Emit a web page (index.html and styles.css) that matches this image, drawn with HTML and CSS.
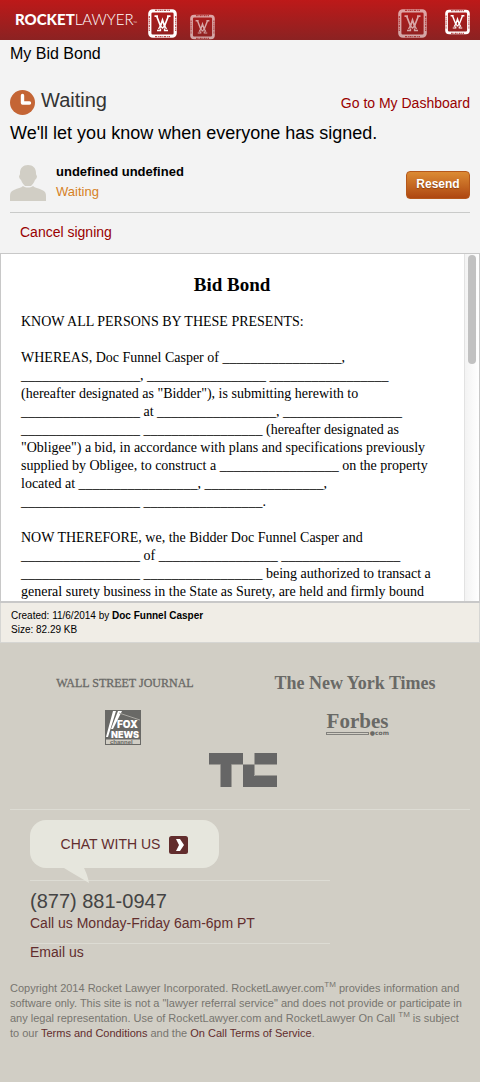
FILE: index.html
```html
<!DOCTYPE html>
<html lang="en">
<head>
<meta charset="utf-8">
<meta name="viewport" content="width=device-width, initial-scale=1">
<title>My Bid Bond</title>
<link rel="stylesheet" href="styles.css">
</head>
<body>
<svg width="0" height="0" class="defs" aria-hidden="true">
  <symbol id="seal" viewBox="0 0 29 29">
    <rect x="1.800" y="1.800" width="25.400" height="25.400" rx="3" fill="none" stroke="currentColor" stroke-width="3.200"/>
    <g fill="none" stroke="#b84a4a" stroke-width="1.200" stroke-dasharray="2 .8 1 .7">
      <path d="M7 1.300h15M7 27.700h15M1.300 7v15M27.700 7v15"/>
    </g>
    <path d="M6.500 7.200h3.500M22.500 7.200H19M8.800 7.500l3.700 9.500 2-6 2 6 3.700-9.500" fill="none" stroke="currentColor" stroke-width="1.700"/>
    <path d="M12.500 16.500l-2 3.500M16.500 16.500l2 3.500M12.500 17l2 2 2-2M9 21.500h3.500v-2M20 21.500h-3.500v-2" fill="none" stroke="currentColor" stroke-width="1.300"/>
  </symbol>
</svg>
<header class="topbar">
  <a class="brand" href="#"><b>ROCKET</b>LAWYER<small>™</small></a>
  <a class="seal seal-large" href="#" aria-label="Menu"><svg><use href="#seal"/></svg></a>
  <a class="seal seal-small dim low" href="#" aria-label="Documents"><svg><use href="#seal"/></svg></a>
  <a class="seal seal-large dim right" href="#" aria-label="Search"><svg><use href="#seal"/></svg></a>
  <a class="seal seal-small" href="#" aria-label="Account"><svg><use href="#seal"/></svg></a>
</header>
<main>
  <section class="status">
    <h1>My Bid Bond</h1>
    <div class="status-row">
      <svg class="clock" viewBox="0 0 25 25" aria-hidden="true"><circle cx="12.5" cy="12.5" r="12.5" fill="#c46535"/><path d="M12.5 5.5v7.500h7" fill="none" stroke="#fff" stroke-width="3.4" stroke-linecap="round" stroke-linejoin="round"/></svg>
      <h2>Waiting</h2>
      <a href="#">Go to My Dashboard</a>
    </div>
    <p class="lead">We'll let you know when everyone has signed.</p>
    <div class="signer">
      <svg class="avatar" viewBox="0 0 36 36" aria-hidden="true"><path d="M18 0c5 0 8 3 8 8 0 1 0 2 1 3 0 2-1 3-2 4-1 3-3 5-4 6h-6c-1-1-3-3-4-6-1-1-2-2-2-4 1-1 1-2 1-3 0-5 3-8 8-8zM13 21c3 2 7 2 10 0 2 2 5 2 9 4 3 1 4 3 4 6v5H0v-5c0-3 1-5 4-6 4-2 7-2 9-4z" fill="#d1cec5"/></svg>
      <div class="signer-name"><strong>undefined undefined</strong><span>Waiting</span></div>
      <button type="button">Resend</button>
    </div>
    <a class="cancel" href="#">Cancel signing</a>
  </section>
  <section class="document">
    <div class="paper">
      <h3>Bid Bond</h3>
      <p>KNOW ALL PERSONS BY THESE PRESENTS:</p>
      <p>WHEREAS, Doc Funnel Casper of _________________, _________________, _________________ _________________ (hereafter designated as "Bidder"), is submitting herewith to _________________ at _________________, _________________ _________________ _________________ (hereafter designated as "Obligee") a bid, in accordance with plans and specifications previously supplied by Obligee, to construct a _________________ on the property located at _________________, _________________, _________________ _________________.</p>
      <p>NOW THEREFORE, we, the Bidder Doc Funnel Casper and _________________ of _________________ _________________ _________________ _________________ being authorized to transact a general surety business in the State as Surety, are held and firmly bound</p>
    </div>
    <div class="track"><div class="thumb"></div></div>
  </section>
  <section class="meta">
    <div>Created: 11/6/2014 by <strong>Doc Funnel Casper</strong></div>
    <div>Size: 82.29 KB</div>
  </section>
</main>
<footer>
  <div class="press">
    <span class="wsj">WALL STREET JOURNAL</span>
    <span class="nyt">The New York Times</span>
    <svg class="fox" viewBox="0 0 36 35" role="img" aria-label="Fox News Channel">
      <path d="M0 0h36v35H0z" fill="#696966"/>
      <path d="M8 1h3L3 27H1zM13 1h4L8 19H6z" fill="#fff"/>
      <path d="M14 3l21 7" stroke="#aaa8a2"/>
      <path d="M1 29.500h34v4.500H1z" fill="#d1cec5"/>
      <text x="12" y="18" class="fox-word">FOX</text>
      <text x="6" y="28" class="fox-word fox-news">NEWS</text>
      <text x="5" y="34" class="fox-channel">channel</text>
    </svg>
    <div class="forbes"><span>Forbes</span><div><i></i><small>●com</small></div></div>
    <svg class="tc" viewBox="0 0 68 34" role="img" aria-label="TechCrunch"><path d="M0 0h34v11H23v23H11V11H0zM46 0h22v11H46zM34 12h11v11h23v11H34z" fill="#666"/><path d="M0 11.500h11.500V34M22.500 34V11.500H68M45.500 0v22.500H68" fill="none" stroke="#9b9994"/></svg>
  </div>
  <div class="contact">
    <a class="chat" href="#">CHAT WITH US
      <svg class="arrow" viewBox="0 0 19 18" aria-hidden="true"><rect width="19" height="18" rx="2.500" fill="#622d2d"/><path d="M7 3h4l4 6-4 6H7l3-6z" fill="#fff"/></svg>
      <svg class="tail" viewBox="0 0 26 15" aria-hidden="true"><path d="M0 0h20c2 4 4 9 5 15C17 10 8 5 0 0z" fill="#e6e6dd"/></svg>
    </a>
    <div class="phone"><span>(877) 881-0947</span><a href="#">Call us Monday-Friday 6am-6pm PT</a></div>
    <a class="email" href="#">Email us</a>
  </div>
  <p class="legal">Copyright 2014 Rocket Lawyer Incorporated. RocketLawyer.com<sup>TM</sup> provides information and software only. This site is not a "lawyer referral service" and does not provide or participate in any legal representation. Use of RocketLawyer.com and RocketLawyer On Call <sup>TM</sup> is subject to our <a href="#">Terms and Conditions</a> and the <a href="#">On Call Terms of Service</a>.</p>
</footer>
</body>
</html>
```
FILE: styles.css
```css
* { box-sizing: border-box; }
body { margin: 0; background: #d1cec5; color: #000; font-family: "Liberation Sans", Arial, sans-serif; font-size: 14px; }
h1, h2, h3, p { margin: 0; font-weight: normal; }
a { color: #900; text-decoration: none; }
svg { display: block; }
.defs { position: absolute; }

.topbar { display: flex; align-items: flex-start; height: 40px; padding: 9px 10px 0 15px; background: linear-gradient(#bd1919, #8b2222); overflow: hidden; }
.brand { width: 133px; color: #fff; font: 300 15px/20px Lato, sans-serif; white-space: nowrap; }
.brand b { font-weight: 900; }
.brand small { font-size: 5px; }
.seal { color: #fff; }
.seal svg { width: 100%; height: 100%; }
.seal-large { width: 29px; height: 29px; }
.seal-small { width: 25px; height: 26px; }
.low { margin: 5px 0 0 13px; }
.right { margin: 0 18px 0 auto; }
.dim { opacity: .6; }

.status { padding: 0 10px; background: #f3f3f3; }
h1 { font-size: 16px; line-height: 28px; }
.status-row { display: flex; align-items: center; margin-top: 18px; height: 32px; }
.clock { width: 25px; height: 25px; }
h2 { margin-left: 6px; margin-bottom: 3px; font-size: 20px; color: #333; }
.status-row a { margin-left: auto; margin-top: 2px; }
.lead { font-size: 18px; line-height: 30px; }
.signer { display: flex; align-items: center; height: 65px; border-bottom: 1px solid #c9cac9; }
.avatar { width: 36px; height: 36px; margin-top: 5px; }
.signer-name { display: flex; flex-direction: column; margin: 3px 0 0 10px; font-size: 13px; line-height: 20px; }
.signer-name span { color: #d6811f; }
.signer button { width: 64px; height: 28px; margin: 10px 0 0 auto; padding: 0 0 2px; border: 1px solid #b5581b; border-radius: 4px; background: linear-gradient(#dc8b34, #ae4711); color: #fff; font: bold 12px "Liberation Sans", Arial, sans-serif; text-shadow: 0 1px 1px #8b3e10; }
.cancel { display: block; padding: 0 10px 2px; line-height: 38px; }

.document { position: relative; height: 350px; border: 1px solid #c8c8c8; border-bottom-width: 2px; background: #fff; overflow: hidden; }
.paper { padding: 21px 36px 0 20px; font: 14px/18px "Liberation Serif", "Times New Roman", serif; }
.paper h3 { font-size: 19px; line-height: 20px; font-weight: bold; text-align: center; }
.paper p { margin-top: 18px; }
.track { position: absolute; top: 0; right: 0; bottom: 0; width: 15px; border-left: 1px solid #e2e2e2; background: linear-gradient(90deg, #f3f3f3, #fff); }
.thumb { width: 8px; height: 109px; margin: 1px 0 0 3px; border-radius: 4px; background: #c1c1c1; }
.meta { padding: 6px 10px 5px; border: 1px solid #d6d6d3; border-top: 0; background: #f0ede6; font-size: 10px; line-height: 14px; }

footer { padding: 0 10px 40px; }
.press { display: grid; grid-template-columns: 1fr 1fr; justify-items: center; align-items: center; padding: 28px 0 22px; border-bottom: 1px solid #dddcd4; color: #696966; }
.wsj { font: 12px/24px "Liberation Serif", serif; white-space: nowrap; -webkit-text-stroke: 0.3px #696966; }
.nyt { font: bold 18px/24px "Liberation Serif", serif; white-space: nowrap; }
.fox { width: 36px; height: 35px; margin: 15px 4px 0 0; }
.fox-word { font: 900 10px Inter, sans-serif; fill: #fff; }
.fox-news { font-size: 9px; }
.fox-channel { font: bold 6px "Liberation Sans", sans-serif; fill: #696966; }
.forbes { margin: 8px 0 0 5px; width: 63px; }
.forbes span { display: block; font: bold 21px/18px "Liberation Serif", serif; text-align: center; }
.forbes div { display: flex; align-items: center; gap: 1px; }
.forbes i { flex: 1; height: 3px; border: 1px solid #82817d; }
.forbes small { font: bold 6px/6px "DejaVu Sans", sans-serif; }
.tc { grid-column: 1 / 3; width: 68px; height: 34px; margin: 8px 0 0 6px; }
.contact { padding: 10px 20px 0; width: 340px; }
.contact a { color: #622d2d; }
.contact .chat { position: relative; display: flex; align-items: center; justify-content: center; gap: 9px; width: 189px; height: 48px; border-radius: 16px; background: #e6e6dd; }
.arrow { width: 19px; height: 18px; margin-top: 2px; }
.tail { position: absolute; left: 34px; top: 100%; width: 26px; height: 15px; }
.phone { margin-top: 12px; padding-top: 9px; height: 63px; border-top: 1px solid #dddcd4; }
.phone span { display: block; font-size: 20px; line-height: 22px; color: #444; }
.phone a { display: block; line-height: 22px; }
.email { display: block; border-top: 1px solid #dddcd4; line-height: 16px; }
.legal { margin-top: 21px; color: #77756f; font-size: 11px; line-height: 15px; }
.legal a { color: #622d2d; }
.legal sup { font-size: 8px; line-height: 0; }
```
